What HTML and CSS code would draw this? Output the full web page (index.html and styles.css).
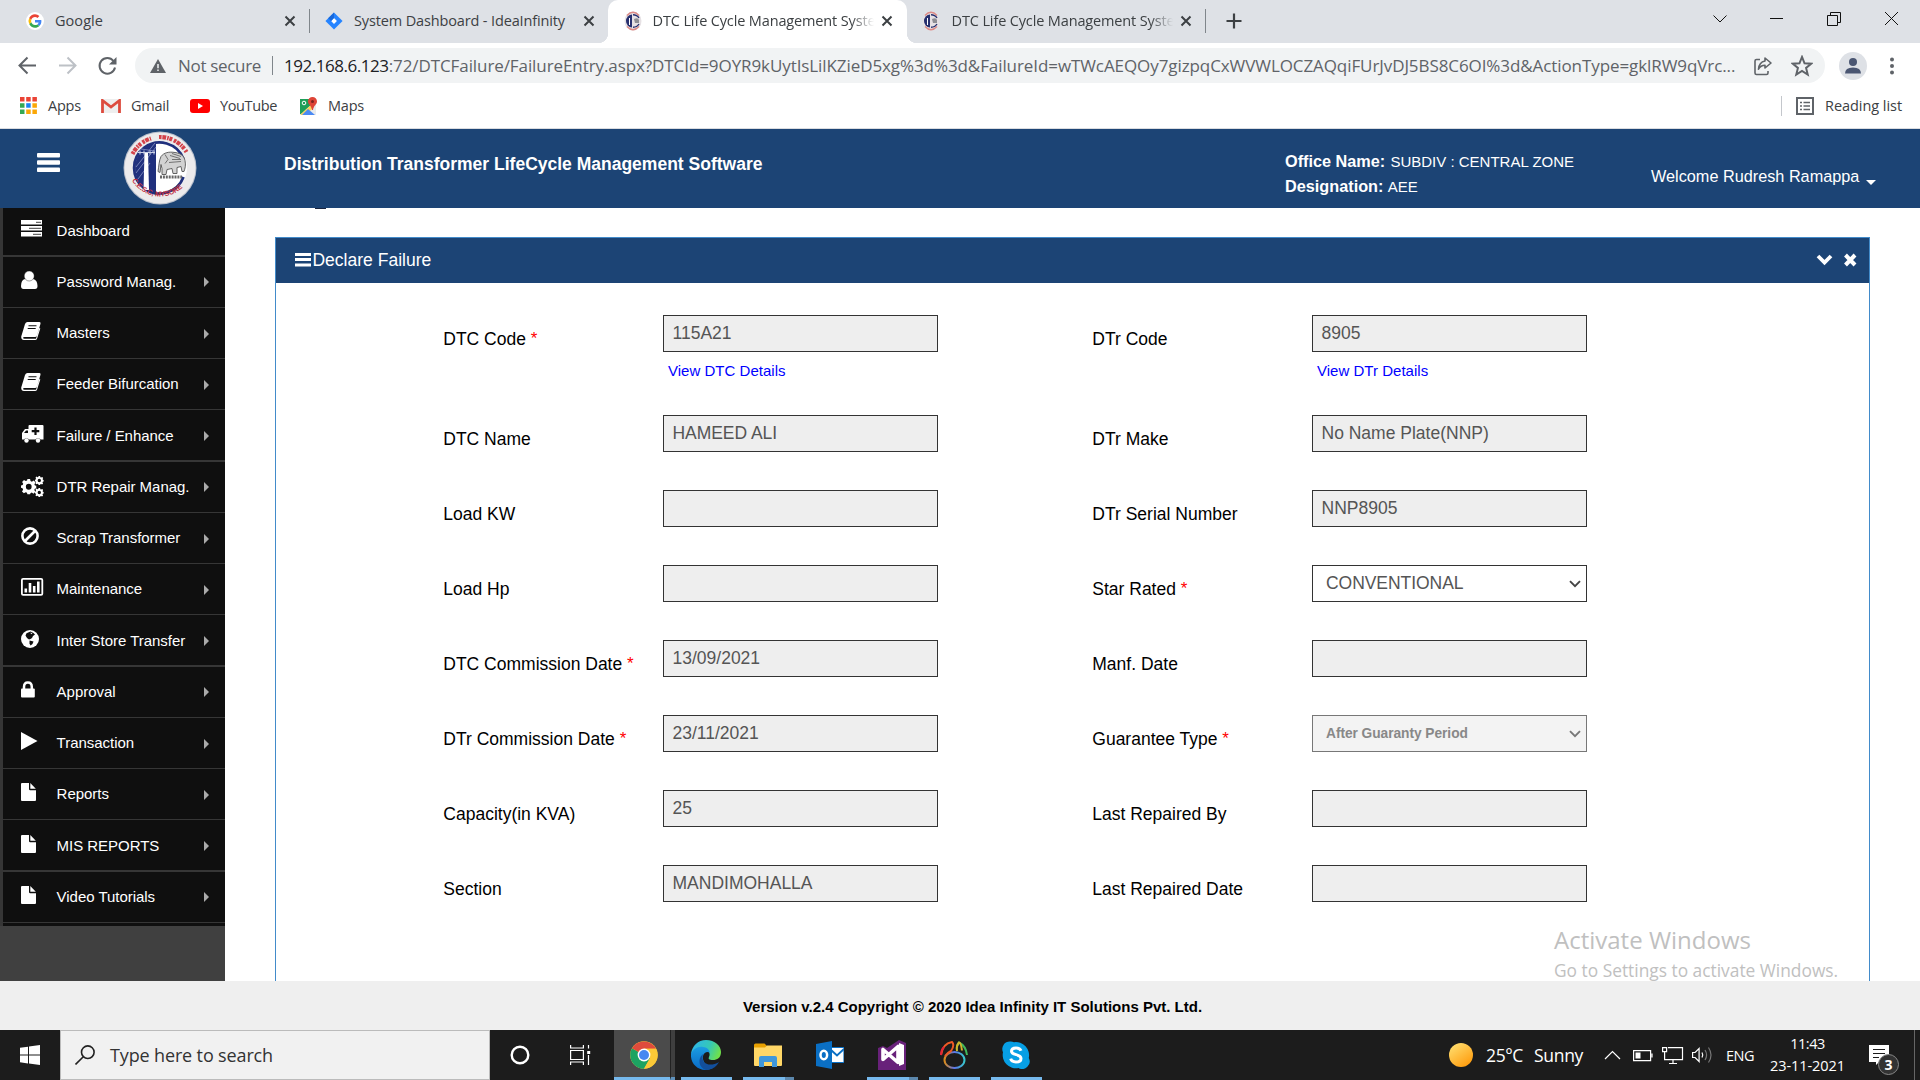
FILE: index.html
```html
<!DOCTYPE html>
<html lang="en">
<head>
<meta charset="utf-8">
<title>DTC Life Cycle Management System</title>
<link rel="stylesheet" href="styles.css">
</head>
<body>
<svg class="defs" width="0" height="0" aria-hidden="true">
  <defs>
    <symbol id="logo" viewBox="0 0 74 74">
      <circle cx="37" cy="37" r="36.5" fill="#b9bfcb"/>
      <circle cx="37" cy="37" r="35.5" fill="#ecebec"/>
      <circle cx="37" cy="37" r="27" fill="#fff"/>
      <path d="M60.500 28A25.500 25.500 0 1 0 60.500 46" fill="none" stroke="#20307d" stroke-width="2.800"/>
      <path d="M33 11.500A26 26 0 0 0 33 62.500Z" fill="#20307d"/>
      <path d="M13 36 32 12M13 42 33 16M15 48l12-16M18 18l14 2" stroke="#8893c4" stroke-width=".8"/>
      <path d="M21.500 21h3.500l1 38h-5.500z" fill="#fff"/>
      <path d="M15 21.500h17M17 19.500v4M21 19.500v4M27 19.500v4M31 19.500v4" stroke="#c9d0e6" stroke-width="1"/>
      <g transform="translate(-1 -4.500)">
        <path d="M39 30c3-4 8-5 14-4 7 1 9 4 10 8 1 5 0 8-1 11h-2l-1-5-4 1v6h-4l-1-5-5 1-1 5h-4v-6l-1-4-1 8-2-1c1-6 1-11 3-15z" fill="#d2d2d2" stroke="#555" stroke-width=".9"/>
        <path d="M43 28l3 5-3 4M48 29l10 3M50 27l9 3M47 36l12-1M50 33h9" stroke="#666" stroke-width=".9" fill="none"/>
        <path d="M38 50.500h22" stroke="#666" stroke-width="3.200" stroke-dasharray="2 .9"/>
      </g>
      <path d="M9.500 23A31 31 0 0 1 28 7.400M36 6A31 31 0 0 1 63.500 21" fill="none" stroke="#d3424a" stroke-width="4.200" stroke-dasharray="2.600 .8 3.800 1 1.600 .7 3 1.800"/>
      <path id="arc" d="M7.500 47A33 33 0 0 0 69 41" fill="none"/>
      <text class="logo-text"><textPath href="#arc" startOffset="3">C.E.S.C, MYSORE</textPath></text>
    </symbol>
    <symbol id="fav" viewBox="0 0 18 20">
      <ellipse cx="9" cy="10" rx="8.500" ry="9.500" fill="#e6e1e4"/>
      <path d="M3 4.500Q9-2 15 4.500M3 15.500Q9 22 15 15.500" stroke="#dc8a86" stroke-width="1.400" fill="none"/>
      <path d="M8 3.500a6 6.500 0 0 0 0 13z" fill="#27306f"/>
      <path d="M9 3.800q4 0 6 3.200M9 16.200q4 0 6-3.200" stroke="#27306f" stroke-width="1.400" fill="none"/>
      <path d="M10 8q4-2 5 1v3h-4z" fill="#8e8e94"/>
      <path d="M5.500 7v7" stroke="#fff"/>
    </symbol>
    <symbol id="x" viewBox="0 0 12 12"><path d="M1.500 1.500l9 9M10.500 1.500l-9 9" stroke="#3c4043" stroke-width="2"/></symbol>
    <symbol id="book" viewBox="0 0 20 18">
      <path d="M6.500 0h12q1.400.2 1 1.800L16 13.500q-.5 1.500-2 1.500H3.500q-1.500.2-1.500 1 .3.800 1.500.800H15l3.500-11 .8.800L16 16.800Q15.500 18 14 18H3Q.3 17.800.2 15q0-1 .5-2L4 2Q4.800 0 6.500 0z" fill="#fff"/>
      <path d="M7.500 3.800h8M6.700 6.500h8" stroke="#0f0f0f" stroke-width="1.100"/>
    </symbol>
    <symbol id="file" viewBox="0 0 15 18"><path d="M0 1q0-1 1-1h7v6q0 1.200 1.200 1.200H15V17q0 1-1 1H1q-1 0-1-1z" fill="#fff"/><path d="M9.300 0l5.500 5.700H9.300z" fill="#fff"/></symbol>
    <symbol id="gear" viewBox="0 0 14 14"><path d="M5.800 0h2.400l.4 1.900 1.200.5L11.500 1.400l1.600 1.700-1 1.600.5 1.200 1.400.3v2.200l-1.500.4-.5 1.200 1 1.600-1.700 1.700-1.600-1-1.200.5L8.200 14H5.800l-.4-1.600-1.200-.5-1.600 1L.9 11.200l1-1.600-.5-1.200L0 8V5.800l1.500-.4.500-1.200-1-1.600L2.700.9l1.600 1 1.200-.5zM7 4.400a2.600 2.600 0 1 0 0 5.200 2.600 2.600 0 0 0 0-5.200z" fill="#fff" fill-rule="evenodd"/></symbol>
  </defs>
</svg>

<div class="screen">
  <div class="tabs">
    <div class="tab tab-google">
      <svg class="fav" viewBox="0 0 48 48"><circle cx="24" cy="24" r="24" fill="#fff"/><path d="M41 24.500c0-1.200-.1-2.300-.3-3.300H24v6.600h9.600c-.5 2.300-1.700 4-3.500 5.200l5.500 4.300c3.400-3.100 5.400-7.500 5.400-12.800z" fill="#4285f4"/><path d="M24 42c4.700 0 8.500-1.600 11.600-4.700L30.100 33c-1.600 1-3.500 1.700-6.100 1.700-4.500 0-8.400-3-9.800-7.200l-5.700 4.400C11.400 38 17.200 42 24 42z" fill="#34a853"/><path d="M14.200 27.500a10.700 10.700 0 0 1 0-7l-5.700-4.400a18 18 0 0 0 0 15.800z" fill="#fbbc05"/><path d="M24 13.300c2.600 0 4.900.9 6.700 2.600l5-5A17.700 17.700 0 0 0 24 6C17.200 6 11.400 10 8.500 16.100l5.700 4.400c1.400-4.200 5.300-7.200 9.800-7.200z" fill="#ea4335"/></svg>
      <span class="tab-title">Google</span><svg class="tab-x"><use href="#x"/></svg>
    </div>
    <div class="tab tab-jira">
      <svg class="fav" viewBox="0 0 20 20"><path d="M10 .5l9.500 9.500-9.500 9.500L.5 10z" fill="#2684ff"/><path d="M10 6.800l3.200 3.200-3.200 3.200L6.800 10z" fill="#fff"/><path d="M10 .5v6.300L6.800 10 3.500 7z" fill="#1868db"/></svg>
      <span class="tab-title">System Dashboard - IdeaInfinity</span><svg class="tab-x"><use href="#x"/></svg>
    </div>
    <div class="tab tab-active">
      <svg class="fav"><use href="#fav"/></svg>
      <span class="tab-title fade">DTC Life Cycle Management Syste</span><svg class="tab-x"><use href="#x"/></svg>
    </div>
    <div class="tab tab-last">
      <svg class="fav"><use href="#fav"/></svg>
      <span class="tab-title fade">DTC Life Cycle Management Syste</span><svg class="tab-x"><use href="#x"/></svg>
    </div>
    <svg class="plus" viewBox="0 0 16 16"><path d="M8 .5v15M.5 8h15" stroke="#3c4043" stroke-width="2.200"/></svg>
    <svg class="win-ctl" viewBox="0 0 200 38" fill="none" stroke="#111"><path d="M5.500 15.500l6.500 6.500 6.500-6.500"/><path d="M62 18.500h13"/><path d="M119.500 15.500h10v10h-10zM122.500 15v-2.500h10v10h-2.500"/><path d="M177 12l13 13M190 12l-13 13"/></svg>
  </div>

  <div class="navbar">
    <svg class="nav-icons" viewBox="0 0 120 34" fill="none" stroke-width="2"><path d="M36 16.500H20M27.500 8.500l-8 8 8 8" stroke="#5f6368"/><path d="M59 16.500h16M67.500 8.500l8 8-8 8" stroke="#bdc1c6"/><path d="M113.500 12A7.800 7.800 0 1 0 115 18.500" stroke="#5f6368"/><path d="M116.500 8v7.500H109z" fill="#5f6368"/></svg>
    <div class="omnibox">
      <svg class="warn" viewBox="0 0 16 14"><path d="M8 0l8 14H0z" fill="#5f6368"/><path d="M8 5v4.200M8 10.500v1.600" stroke="#f1f3f4" stroke-width="1.500"/></svg>
      <span class="not-secure">Not secure</span><i class="omni-sep"></i>
      <span class="url"><b>192.168.6.123</b>:72/DTCFailure/FailureEntry.aspx?DTCId=9OYR9kUytIsLilKZieD5xg%3d%3d&amp;FailureId=wTWcAEQOy7gizpqCxWVWLOCZAQqiFUrJvDJ5BS8C6OI%3d&amp;ActionType=gklRW9qVrc...</span>
      <svg class="share" viewBox="0 0 20 20" fill="none" stroke="#5f6368" stroke-width="1.600"><path d="M7 3.500H3.500q-1.500 0-1.500 1.500v12q0 1.500 1.500 1.500h10q1.500 0 1.500-1.500v-2"/><path d="M12 2l6 5-6 5V9.200q-4.500 0-6.500 4 .5-7 6.500-8.200z" stroke-linejoin="round"/></svg>
      <svg class="star" viewBox="0 0 20 20"><path d="M10 1.800l2.300 5.700 6 .4-4.600 3.900 1.500 5.900-5.200-3.300-5.200 3.300 1.500-5.900L1.700 7.900l6-.4z" fill="none" stroke="#5f6368" stroke-width="1.800"/></svg>
    </div>
    <svg class="avatar" viewBox="0 0 28 28"><circle cx="14" cy="14" r="14" fill="#dee1e6"/><circle cx="14" cy="10" r="4" fill="#4a5672"/><path d="M6 21.500q0-6 8-6t8 6z" fill="#4a5672"/></svg>
    <svg class="dots" viewBox="0 0 6 18" fill="#5f6368"><circle cx="3" cy="2.500" r="2"/><circle cx="3" cy="9" r="2"/><circle cx="3" cy="15.500" r="2"/></svg>
  </div>

  <div class="bookmarks">
    <svg class="bm-icon bm-apps" viewBox="0 0 17 17"><path d="M0 0h4.500v4.500H0zM6.200 0h4.500v4.500H6.200zM12.400 0h4.500v4.500h-4.500z" fill="#ea4335"/><path d="M0 6.200h4.500v4.500H0zM0 12.400h4.500v4.500H0z" fill="#34a853"/><path d="M6.200 6.200h4.500v4.500H6.200z" fill="#1a83f4"/><path d="M12.400 6.200h4.500v4.500h-4.500zM6.200 12.400h4.500v4.500H6.200zM12.400 12.400h4.500v4.500h-4.500z" fill="#fba706"/></svg>
    <span class="bm bm1">Apps</span>
    <svg class="bm-icon bm-gmail" viewBox="0 0 20 14"><path d="M1 0h18v14H1z" fill="#eee"/><path d="M1.500 14V1.500L10 8l8.500-6.500V14" fill="none" stroke="#dd4b3e" stroke-width="2.800"/></svg>
    <span class="bm bm2">Gmail</span>
    <svg class="bm-icon bm-yt" viewBox="0 0 20 14"><rect width="20" height="14" rx="3" fill="#f00"/><path d="M8 4l5 3-5 3z" fill="#fff"/></svg>
    <span class="bm bm3">YouTube</span>
    <svg class="bm-icon bm-maps" viewBox="0 0 19 18"><path d="M1 2h16v16H1z" fill="#e8eaed"/><path d="M1 2h11l1 5L2 17H1z" fill="#1e9e58"/><path d="M1.500 17.500L13 7l2 3-8 8H2z" fill="#fdd35a"/><path d="M3 18l6-6 7 6z" fill="#4a8af4"/><path d="M13.500 0a4.500 4.500 0 0 1 4.500 4.500c0 3-3.500 4-4 8.500h-1C12.500 8.500 9 7.500 9 4.500A4.500 4.500 0 0 1 13.500 0z" fill="#de4437"/><circle cx="13.500" cy="4.500" r="1.500" fill="#7b231e"/><circle cx="5" cy="6" r="1.800" fill="none" stroke="#fff"/></svg>
    <span class="bm bm4">Maps</span>
    <i class="bm-sep"></i>
    <svg class="reading" viewBox="0 0 18 18" fill="none" stroke="#5f6368"><rect x="1" y="1" width="16" height="16" stroke-width="2"/><path d="M4 5.500h2M4 9h2M4 12.500h2M7.500 5.500H14M7.500 9H14M7.500 12.500H14" stroke-width="1.500"/></svg>
    <span class="bm bm5">Reading list</span>
  </div>

  <header class="app-header">
    <svg class="burger" viewBox="0 0 23 19" fill="#fff"><rect width="23" height="4.500" rx="1"/><rect y="7.300" width="23" height="4.500" rx="1"/><rect y="14.600" width="23" height="4.500" rx="1"/></svg>
    <svg class="logo"><use href="#logo"/></svg>
    <h1>Distribution Transformer LifeCycle Management Software</h1>
    <div class="office"><div><b>Office Name:</b> SUBDIV : CENTRAL ZONE</div><div><b>Designation:</b> AEE</div></div>
    <div class="welcome">Welcome Rudresh Ramappa</div><i class="caret"></i>
  </header>

  <div class="main">
    <nav class="sidebar">
      <ul class="menu">
        <li class="first"><svg viewBox="0 0 23 18"><path d="M0 0h21v4.500H0zM0 6h21v4.500H0zM0 12h21v4.500H0z" fill="#fff"/><path d="M15 2.300h5M8 8.300h12M12 14.300h8" stroke="#666" stroke-width="1.200"/></svg><span>Dashboard</span></li>
        <li><svg viewBox="0 0 23 18"><path d="M0 15q0-6 4-7h8q4.500 1 4.500 7 0 3-2.500 3H2.500Q0 18 0 15z" fill="#fff"/><circle cx="8.200" cy="5" r="5" fill="#fff" stroke="#0f0f0f" stroke-width=".4"/></svg><span>Password Manag.</span><i></i></li>
        <li><svg viewBox="0 0 23 18"><use href="#book" width="20" height="18"/></svg><span>Masters</span><i></i></li>
        <li><svg viewBox="0 0 23 18"><use href="#book" width="20" height="18"/></svg><span>Feeder Bifurcation</span><i></i></li>
        <li><svg viewBox="0 0 23 18"><path d="M8.500 0h13q1 0 1 1v13.500h-3a3 3 0 0 0-5 0H8a3 3 0 0 0-5 0H1V8l3-4h3.500V1q0-1 1-1z" fill="#fff"/><circle cx="5.500" cy="15.500" r="2.200" fill="#fff"/><circle cx="17" cy="15.500" r="2.200" fill="#fff"/><path d="M14.500 2.500v7.500M10.700 6.200h7.600" stroke="#0f0f0f" stroke-width="2.200"/><path d="M3 8l2-2.500h2V8z" fill="#0f0f0f"/></svg><span>Failure / Enhance</span><i></i></li>
        <li><svg class="gears" viewBox="0 0 23 21"><use href="#gear" x="0" y="3" width="15.500" height="15.500"/><use href="#gear" x="13.800" y="0" width="9" height="9"/><use href="#gear" x="13.800" y="12" width="9" height="9"/></svg><span>DTR Repair Manag.</span><i></i></li>
        <li><svg viewBox="0 0 23 18"><circle cx="9" cy="9" r="7.600" fill="none" stroke="#fff" stroke-width="2.600"/><path d="M3.500 14.500l11-11" stroke="#fff" stroke-width="2.600"/></svg><span>Scrap Transformer</span><i></i></li>
        <li><svg viewBox="0 0 23 18"><rect x=".9" y=".9" width="20.400" height="16" rx="1.200" fill="none" stroke="#fff" stroke-width="1.800"/><path d="M3.500 10.500h2.600v4H3.500zM7.700 5h2.600v9.500H7.700zM11.900 8h2.600v6.500h-2.600zM16 3.500h2.600v11H16z" fill="#fff"/></svg><span>Maintenance</span><i></i></li>
        <li><svg viewBox="0 0 23 18"><circle cx="9" cy="9" r="9" fill="#fff"/><path d="M5.500 3.200l4-1.700L12.500 3l1.500 1.500-2 1.500-1 2-1.500 1L8 9.500 6 8 4.500 5.500z" fill="#0f0f0f"/><path d="M8.500 10.500l4 1-1 2.500-2 1.500-1-2z" fill="#0f0f0f"/><path d="M9.500 2.500l2 .8-1.500 1z" fill="#fff"/></svg><span>Inter Store Transfer</span><i></i></li>
        <li><svg viewBox="0 0 23 18"><rect y="7.500" width="13.800" height="9" rx="1" fill="#fff"/><path d="M3 8.500V6q0-4.500 3.900-4.500T10.800 6v2.500" fill="none" stroke="#fff" stroke-width="2.500"/></svg><span>Approval</span><i></i></li>
        <li><svg viewBox="0 0 23 18"><path d="M0 0l16.500 9L0 18z" fill="#fff"/></svg><span>Transaction</span><i></i></li>
        <li><svg viewBox="0 0 23 18"><use href="#file" width="15" height="18"/></svg><span>Reports</span><i></i></li>
        <li><svg viewBox="0 0 23 18"><use href="#file" width="15" height="18"/></svg><span>MIS REPORTS</span><i></i></li>
        <li><svg viewBox="0 0 23 18"><use href="#file" width="15" height="18"/></svg><span>Video Tutorials</span><i></i></li>
        <li class="tail"></li>
      </ul>
    </nav>
    <section class="content">
      <i class="scrolled-glyph"></i>
      <div class="panel">
        <div class="panel-head">
          <svg class="bars" viewBox="0 0 16 14" fill="#fff"><path d="M0 0h16v3H0zM0 5h16v3H0zM0 10.500h16v3H0z"/></svg><span>Declare Failure</span>
          <svg class="tools" viewBox="0 0 42 14" fill="none" stroke="#fff"><path d="M2 3l6.500 6.500L15 3" stroke-width="3.800"/><path d="M29.500 2l9.500 10M39 2l-9.500 10" stroke-width="4"/></svg>
        </div>
        <div class="form">
          <div class="col">
            <div class="row row-link"><label>DTC Code <em>*</em></label><div><div class="field">115A21</div><a>View DTC Details</a></div></div>
            <div class="row"><label>DTC Name</label><div class="field tight">HAMEED ALI</div></div>
            <div class="row"><label>Load KW</label><div class="field"></div></div>
            <div class="row"><label>Load Hp</label><div class="field"></div></div>
            <div class="row"><label>DTC Commission Date <em>*</em></label><div class="field">13/09/2021</div></div>
            <div class="row"><label>DTr Commission Date <em>*</em></label><div class="field">23/11/2021</div></div>
            <div class="row"><label>Capacity(in KVA)</label><div class="field">25</div></div>
            <div class="row"><label>Section</label><div class="field">MANDIMOHALLA</div></div>
          </div>
          <div class="col">
            <div class="row row-link"><label>DTr Code</label><div><div class="field">8905</div><a>View DTr Details</a></div></div>
            <div class="row"><label>DTr Make</label><div class="field">No Name Plate(NNP)</div></div>
            <div class="row"><label>DTr Serial Number</label><div class="field">NNP8905</div></div>
            <div class="row"><label>Star Rated <em>*</em></label><div class="field select"><span>CONVENTIONAL</span><svg viewBox="0 0 12 8"><path d="M1 1.200l5 5 5-5" fill="none" stroke="#444" stroke-width="1.900"/></svg></div></div>
            <div class="row"><label>Manf. Date</label><div class="field"></div></div>
            <div class="row"><label>Guarantee Type <em>*</em></label><div class="field select off"><span>After Guaranty Period</span><svg viewBox="0 0 12 8"><path d="M1 1.200l5 5 5-5" fill="none" stroke="#777" stroke-width="1.900"/></svg></div></div>
            <div class="row"><label>Last Repaired By</label><div class="field"></div></div>
            <div class="row"><label>Last Repaired Date</label><div class="field"></div></div>
          </div>
        </div>
      </div>
    </section>
  </div>

  <footer>Version v.2.4 Copyright © 2020 Idea Infinity IT Solutions Pvt. Ltd.</footer>

  <div class="taskbar">
    <div class="start"><svg viewBox="0 0 20 20" fill="#fff"><path d="M0 2.800l8-1.100v7.900H0zM9 1.500L20 0v9.600H9zM0 10.500h8v7.900l-8-1.100zM9 10.500h11V20L9 18.500z"/></svg></div>
    <div class="search"><svg viewBox="0 0 20 20" fill="none" stroke="#222" stroke-width="1.600"><circle cx="12.800" cy="7.200" r="6.300"/><path d="M8.300 11.700L.5 19.500"/></svg><span>Type here to search</span></div>
    <div class="cell cortana"><svg viewBox="0 0 20 20"><circle cx="10" cy="10" r="8.300" fill="none" stroke="#fff" stroke-width="2.400"/></svg></div>
    <div class="cell tview"><svg viewBox="0 0 21 20" fill="none" stroke="#fff" stroke-width="1.200"><path d="M.6 0v3h12.800V0M.6 20v-3h12.800v3M.6 5.500h12.800v9H.6zM18.500 0v3.500M18.500 10v10"/><path d="M17.200 6h3v3h-3z" fill="#fff" stroke="none"/></svg></div>
    <div class="app chrome"><svg viewBox="0 0 28 28"><circle cx="14" cy="14" r="13.800" fill="#fbc937"/><path d="M14 14L2 7.200A13.800 13.800 0 0 0 14 27.800l6-10.500z" fill="#1da362"/><path d="M14 14L2 7.200A13.800 13.800 0 0 1 26 7.700H14z" fill="#df4b3c"/><path d="M14 7.700h12A13.800 13.800 0 0 1 14 27.800l6-10.500z" fill="#fbc937"/><circle cx="14" cy="14" r="6.400" fill="#fff"/><circle cx="14" cy="14" r="5" fill="#4688f1"/></svg></div>
    <div class="chrome-edge"></div>
    <div class="app edge"><svg viewBox="0 0 30 30"><defs><linearGradient id="eg" x1="0" x2="1" y1=".2" y2=".5"><stop offset="0" stop-color="#2db4ee"/><stop offset=".6" stop-color="#35c8b5"/><stop offset="1" stop-color="#6fe04b"/></linearGradient><linearGradient id="eb" x1="0" x2="0" y1="0" y2="1"><stop offset="0" stop-color="#1b9de2"/><stop offset="1" stop-color="#0a6ac6"/></linearGradient></defs><path d="M0 14C1 6 7 0 15 0c9 0 15 6 15 12 0 6-4 8-8 8-4 0-5-1-4-3 2-4-1-7-5-7-5 0-10 2-13 4z" fill="url(#eg)"/><path d="M0 14c2-5 7-8 12-7 5 .5 7 4 7 6-2-2-6-1-7 3-1 6 4 11 10 12-12 6-23-3-22-14z" fill="url(#eb)"/><path d="M12 14c-3 9 6 14 16 8-3 6-9 8-13 8-7-2-9-11-3-16z" fill="#124f9c"/></svg></div>
    <div class="app split explorer"><svg viewBox="0 0 28 24"><path d="M0 2q0-1.500 1.500-1.500h9L13 3v4H0z" fill="#e8a000"/><path d="M0 4.500h11l2-2h15V22q0 1-1 1H1q-1 0-1-1z" fill="#ffd767"/><path d="M5 24V15q0-2 2-2h14q2 0 2 2v9h-5v-5h-8v5z" fill="#3f97db"/></svg></div>
    <div class="app outlook"><svg viewBox="0 0 28 28"><path d="M14 6.500h14v15H14z" fill="#fff" stroke="#0a6fc4" stroke-width="1.200"/><path d="M15 9l6 5.500L28 8" fill="none" stroke="#0a6fc4" stroke-width="2"/><path d="M0 3l16-3v28L0 25z" fill="#0a6fc4"/><ellipse cx="7.800" cy="14" rx="3.300" ry="4.200" fill="none" stroke="#fff" stroke-width="2.500"/></svg></div>
    <div class="app split vs"><svg viewBox="0 0 28 30"><path d="M0 8l5-2 4 2 12-8 7 3v27H0z" fill="#68217a"/><path d="M5 9.500v10L20 6.500v16z" fill="none" stroke="#fff" stroke-width="3.600" stroke-linejoin="round"/><path d="M21 3l5 2v19l-5 2z" fill="#fff"/></svg></div>
    <div class="app navicat"><svg viewBox="0 0 28 28" fill="none" stroke-width="2"><defs><linearGradient id="nv" x1="0" x2="1"><stop offset="0" stop-color="#d98a1c"/><stop offset=".5" stop-color="#5c74ec"/><stop offset="1" stop-color="#38c6cc"/></linearGradient></defs><ellipse cx="14.500" cy="19" rx="10" ry="8" stroke="url(#nv)"/><path d="M1 14C2 7 6 2 12 1q3 3-1 9-4 2-6 5" stroke="#ef5b25"/><path d="M1 14q0-5 3-8" stroke="#e52638"/><path d="M17 10q-1-5 2-8.500Q26 5 27 14" stroke="#42b85c"/><path d="M17 10q-1-5 2-8.500 2 0 3 8" stroke="#d3b52a"/></svg></div>
    <div class="app skype"><svg viewBox="0 0 28 28"><path d="M8 .5a7.500 7.500 0 0 0-7 10.700A13.200 13.200 0 0 0 16.500 27a7.500 7.500 0 0 0 10.300-10A13.200 13.200 0 0 0 12 1.200 7.500 7.500 0 0 0 8 .5z" fill="#079fe4"/><path d="M19 9.800q-1-2.800-5-2.800-4.500 0-4.500 3.200c0 4.600 9.500 2.200 9.500 7.200q0 3.500-5 3.500-4.500 0-5.300-3.200" fill="none" stroke="#fff" stroke-width="3"/></svg></div>
    <div class="tray">
      <i class="sun"></i><span class="temp">25°C</span><span class="sunny">Sunny</span>
      <svg class="tray-icons" viewBox="0 0 110 20" fill="none" stroke="#fff" stroke-width="1.200"><path d="M1 14l7.500-7.500L16 14"/><path d="M29.600 5.600h17v10h-17zM48 8.500v4" /><path d="M31.500 7.500h5v6h-5z" fill="#fff" stroke="none"/><path d="M64 2.600h14.500v12H60.600V8M69 15v3M65 18.500h8M58.600 2.600h4v4h-4zM60.600 7v2"/><path d="M88.600 7.500h2.500l4-4v13l-4-4h-2.500z"/><path d="M98 7.500q1.500 2.500 0 5"/><path d="M101 5q3.200 5 0 10M104.500 2.500q5 7.500 0 15" stroke="#777"/></svg>
      <span class="lang">ENG</span>
      <div class="clock"><div class="time">11:43</div><div class="date">23-11-2021</div></div>
      <div class="notif"><svg viewBox="0 0 20 20"><path d="M0 0h20v17H10l-3 3v-3H0z" fill="#fff"/><path d="M4 4.500h12M4 8.500h12M4 12.500h6" stroke="#1c1c1c" stroke-width="1.200"/></svg><b>3</b></div>
      <i class="peek"></i>
    </div>
  </div>

  <div class="watermark"><div class="wm1">Activate Windows</div><div class="wm2">Go to Settings to activate Windows.</div></div>
</div>
</body>
</html>
```
FILE: styles.css
```css
* { box-sizing: border-box; }
body { margin: 0; background: #fff; font-family: "Liberation Sans", Arial, sans-serif; }
svg { display: block; flex: none; }
.defs { position: absolute; }
.screen { position: relative; width: 1920px; height: 1080px; display: flex; flex-direction: column; overflow: hidden; }
.tabs, .navbar, .bookmarks, .taskbar, .watermark { font-family: "Open Sans", "Noto Sans", sans-serif; white-space: nowrap; }

/* tab strip */
.tabs { display: flex; height: 43px; background: #dee1e6; }
.tab { display: flex; align-items: center; height: 43px; padding-bottom: 1px; font-size: 14.5px; color: #3c4043; letter-spacing: -.14px; }
.tab-google { width: 310px; padding-left: 26px; }
.tab-jira { width: 298px; padding-left: 15px; position: relative; }
.tab-jira::before, .tab-last::after { content: ""; width: 1px; height: 24px; background: #80868b; position: absolute; left: -1px; top: 9px; }
.tab-active { width: 299px; padding-left: 16px; background: #fff; border-radius: 10px 10px 0 0; position: relative; }
.tab-active::before, .tab-active::after { content: ""; position: absolute; bottom: 0; width: 10px; height: 10px; }
.tab-active::before { left: -10px; background: radial-gradient(circle at 0 0, #dee1e6 10px, #fff 10.500px); }
.tab-active::after { right: -10px; background: radial-gradient(circle at 100% 0, #dee1e6 10px, #fff 10.500px); }
.tab-last { width: 299px; padding-left: 15px; position: relative; }
.tab-last::after { left: 298px; }
.fav { width: 18px; height: 20px; }
.tab-title { margin-left: 11px; width: 229px; line-height: 20px; padding-bottom: 1px; }
.tab-google .tab-title { letter-spacing: .05px; }
.tab-active .tab-title, .tab-last .tab-title { margin-left: 10.600px; width: 227px; margin-right: 1.400px; }
.tab-last .tab-title { margin-left: 11.600px; }
.fade { -webkit-mask-image: linear-gradient(90deg, #000 198px, transparent 221px); mask-image: linear-gradient(90deg, #000 198px, transparent 221px); }
.tab-x { width: 12px; height: 12px; }
.plus { width: 16px; height: 16px; margin: 13px 0 0 20px; }
.win-ctl { width: 200px; height: 38px; margin-left: auto; margin-right: 12px; }

/* navigation */
.navbar { display: flex; align-items: center; height: 45px; }
.nav-icons { width: 120px; height: 34px; margin-right: 15px; }
.omnibox { display: flex; align-items: center; width: 1690px; height: 35px; background: #f1f3f4; border-radius: 18px; padding-left: 15px; font-size: 17px; color: #5f6368; }
.warn { width: 16px; height: 14px; }
.not-secure { margin-left: 12px; width: 94px; letter-spacing: -.32px; }
.omni-sep { width: 1px; height: 19px; background: #80868b; }
.url { margin-left: 11px; width: 1464px; letter-spacing: -.085px; }
.url b { font-weight: 400; color: #202124; letter-spacing: -.46px; }
.share { width: 20px; height: 20px; margin-left: 5px; }
.star { width: 22px; height: 22px; margin-left: 18px; }
.avatar { width: 28px; height: 28px; margin-left: 14px; }
.dots { width: 6px; height: 18px; margin-left: 22px; }

/* bookmarks */
.bookmarks { display: flex; align-items: center; height: 41px; padding-bottom: 5px; border-bottom: 1px solid #dadce0; font-size: 14.5px; color: #3c4043; }
.bm-apps { width: 17px; height: 17px; margin-left: 20px; }
.bm-gmail { width: 20px; height: 14px; }
.bm-yt { width: 20px; height: 14px; }
.bm-maps { width: 19px; height: 18px; }
.bm { letter-spacing: -.22px; }
.bm1 { margin-left: 11px; width: 53px; }
.bm2 { margin-left: 10px; width: 59px; }
.bm3 { margin-left: 10px; width: 79px; letter-spacing: -.37px; }
.bm4 { margin-left: 10px; width: 36px; }
.bm-sep { width: 1px; height: 20px; background: #c4c7cc; margin-left: 1417px; }
.reading { width: 18px; height: 18px; margin-left: 14px; }
.bm5 { margin-left: 11px; letter-spacing: -.05px; }

/* application header */
.app-header { display: flex; height: 79px; background: #1c4475; color: #fff; white-space: nowrap; }
.burger { width: 23px; height: 19px; margin: 24px 0 0 37px; }
.logo { width: 74px; height: 74px; margin: 2px 0 0 63px; }
.logo-text { font: bold 7.200px "Liberation Sans", sans-serif; fill: #c5303c; letter-spacing: -.2px; }
h1 { margin: 25px 0 0 87px; width: 1001px; font-size: 17.5px; line-height: 20px; font-weight: 700; }
.office { width: 366px; padding-top: 20px; font-size: 15px; line-height: 25px; }
.office b { font-size: 16.25px; margin-right: 1px; }
.welcome { width: 215px; padding-top: 35px; font-size: 16.25px; line-height: 24px; }
.caret { width: 0; height: 0; margin-top: 51px; border: 5px solid transparent; border-top-color: #fff; border-bottom: 0; }

/* sidebar */
.main { display: flex; height: 773px; }
.sidebar { width: 225px; background: #404040; }
.menu { display: flex; flex-direction: column; gap: 1.25px; margin: 0; padding: 0 0 0 3px; background: #363636; list-style: none; }
.menu li { display: flex; align-items: center; height: 50px; padding: 0 0 .6px 18px; background: #0f0f0f; color: #fff; font-size: 15px; }
.menu .first { height: 47.4px; padding-bottom: 2px; }
.menu .tail { height: 3px; }
.menu svg { width: 23px; height: 18px; margin-bottom: 3px; }
.menu .gears { height: 21px; margin-bottom: 0; }
.menu span { width: 147px; margin-left: 12.600px; margin-right: .4px; letter-spacing: -.03px; white-space: nowrap; }
.menu i { border: 5px solid transparent; border-left-color: #aaa; border-right: 0; margin-top: 2px; }

/* panel */
.content { position: relative; flex: 1; padding: 29px 50px 0; }
.scrolled-glyph { position: absolute; left: 90px; top: 0; width: 11px; height: 1px; background: #1a2540; }
.panel { height: 744px; border: 1px solid #428bca; border-bottom: 0; background: #fff; }
.panel-head { display: flex; align-items: center; height: 45px; padding: 0 11.500px 0 19px; background: #1c4475; color: #fff; font-size: 17.5px; }
.bars { width: 16px; height: 14px; margin-bottom: 1px; }
.panel-head span { margin-left: 1.400px; letter-spacing: .02px; }
.tools { width: 42px; height: 14px; margin-left: auto; margin-bottom: 1px; }
.form { display: grid; grid-template-columns: 649px 649px; padding: 32px 0 0 167px; font-size: 17.5px; color: #000; }
.row { display: grid; grid-template-columns: 220px 275px; height: 75px; }
.row-link { height: 100px; }
.row label { padding: 14px 0 0 .3px; line-height: 20px; }
.row em { font-size: 17px; font-style: normal; color: #f00; position: relative; top: -1px; }
.field { display: flex; align-items: center; height: 37px; padding: 0 8px 1px 8.500px; border: 1px solid #333; background: #eee; color: #555; }
.tight { letter-spacing: -.05px; }
.row a { display: block; padding: 9px 0 0 5px; font-size: 15px; line-height: 20px; letter-spacing: .02px; color: #00f; }
.select { justify-content: space-between; padding: 0 5px 1px 13px; background: #fff; }
.select span { letter-spacing: -.05px; }
.select svg { width: 12px; height: 8px; margin-top: 2px; }
.off { border-color: #777; background: #f3f3f3; color: #888; }
.off span { font-size: 13.750px; font-weight: 700; }

footer { height: 49px; padding-left: 25px; background: #efefef; text-align: center; font-size: 15px; line-height: 52px; font-weight: 700; color: #000; }

/* taskbar */
.taskbar { display: flex; height: 50px; background: #1c1c1c; color: #fff; }
.start { width: 60px; padding: 15px 0 0 20px; }
.start svg { width: 20px; height: 20px; }
.search { display: flex; align-items: center; width: 430px; padding-left: 14px; border: 1px solid #bbb; background: #f1f1f1; color: #333; font-size: 18px; letter-spacing: -.14px; }
.search svg { width: 20px; height: 20px; margin-right: 15px; }
.cell { display: flex; align-items: center; justify-content: center; width: 60px; }
.cortana svg { width: 20px; height: 20px; }
.tview { width: 64px; padding-left: 0; }
.tview svg { width: 21px; height: 20px; margin-left: -3px; }
.app { display: flex; align-items: center; justify-content: center; width: 51px; margin-right: 11px; border-bottom: 3px solid #76b9ed; padding-top: 3px; }
.app svg { width: 28px; height: 28px; }
.chrome { width: 56px; margin: 0; background: #4b4b4b; padding-left: 4px; }
.chrome-edge { width: 5px; margin-right: 6px; background: #3f3f3f; border-left: 1px solid #222; border-bottom: 3px solid #5f92bd; }
.edge svg { width: 30px; height: 30px; }
.app:not(.chrome) svg { margin-right: 2px; }
.explorer svg { height: 24px; }
.split { border-image: linear-gradient(90deg, #76b9ed 40px, #5c88ad 40px) 3; border-image-width: 0 0 3px; }
.outlook { border-bottom-color: transparent; }
.vs svg { height: 30px; }
.tray { display: flex; align-items: center; margin-left: auto; padding-right: 5px; }
.sun { width: 24px; height: 24px; border-radius: 50%; background: linear-gradient(145deg, #ffe478, #ff9300); }
.temp { width: 48px; margin-left: 13px; font-size: 17.5px; letter-spacing: -.38px; }
.sunny { width: 70px; font-size: 17.5px; letter-spacing: -.31px; }
.tray-icons { width: 110px; height: 20px; }
.lang { width: 44px; margin-left: 12px; font-size: 14.5px; letter-spacing: -.5px; }
.clock { width: 75px; text-align: center; font-size: 14.5px; line-height: 22.500px; }
.time { letter-spacing: -.5px; }
.date { letter-spacing: -.07px; }
.notif { position: relative; width: 45px; margin-left: 24px; }
.notif svg { width: 20px; height: 20px; }
.notif b { position: absolute; left: 9px; top: 9px; width: 21px; height: 21px; border: 1px solid #888; border-radius: 50%; background: #333; text-align: center; font-size: 14px; line-height: 19px; }
.peek { width: 1px; height: 50px; background: #666; }

/* activation notice floats over the page */
.watermark { position: absolute; left: 1554px; top: 922px; color: #c0c0c0; }
.wm1 { font-size: 24px; line-height: 36px; }
.wm2 { font-size: 17.350px; line-height: 24px; height: 24px; }
```
